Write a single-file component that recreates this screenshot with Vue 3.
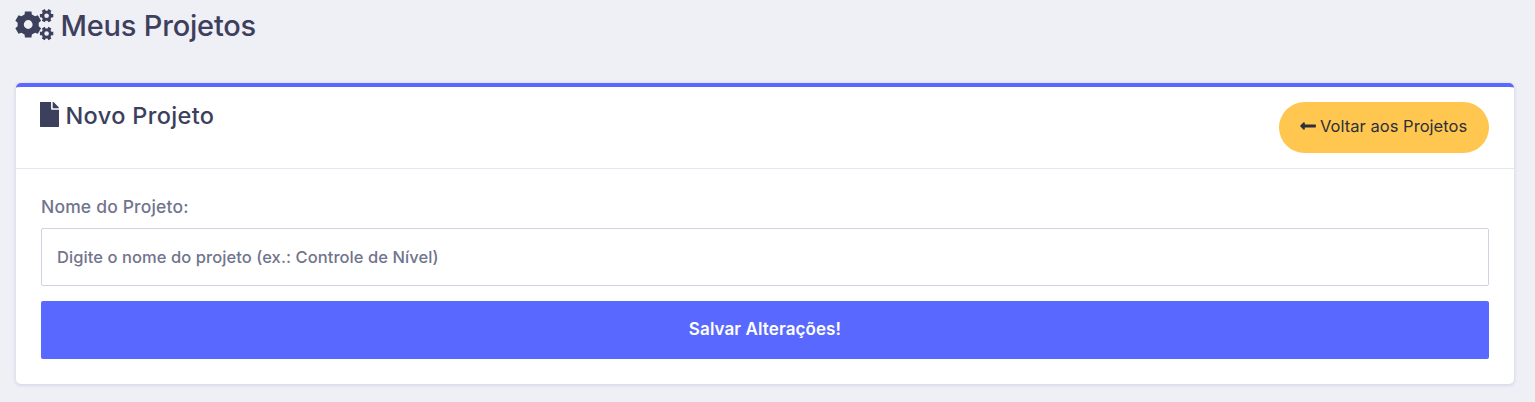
<script setup>
// Outline of a toothed wheel; `start` is the angle of the first tooth in degrees.
function gear(cx, cy, outer, root, hole, start) {
  const points = []
  for (let i = 0; i < 6; i++) {
    const mid = start + i * 60
    for (const [offset, radius] of [[-20, root], [-14, outer], [14, outer], [20, root]]) {
      const a = ((mid + offset) * Math.PI) / 180
      points.push(`${(cx + radius * Math.cos(a)).toFixed(2)} ${(cy + radius * Math.sin(a)).toFixed(2)}`)
    }
  }
  return `M${points.join('L')}Z M${cx - hole} ${cy}a${hole} ${hole} 0 1 0 ${hole * 2} 0a${hole} ${hole} 0 1 0 ${-hole * 2} 0Z`
}
const gears = [
  gear(12.2, 15.5, 13.4, 10.7, 4.4, 30),
  gear(30.6, 6.7, 6.9, 5.1, 2.3, 0),
  gear(30.6, 24.5, 6.9, 5.1, 2.3, 0),
].join(' ')
</script>

<template>
  <main class="page">
    <h1 class="title">
      <svg class="cogs" viewBox="0 0 38 31"><path :d="gears" fill-rule="evenodd" /></svg>
      <span>Meus Projetos</span>
    </h1>
    <section class="card">
      <header class="head">
        <h2 class="subtitle">
          <svg class="file" viewBox="0 0 384 512" preserveAspectRatio="none"><path d="M224 136V0H8C3 0 0 3 0 8v496c0 5 3 8 8 8h368c5 0 8-3 8-8V160H248c-13.2 0-24-10.8-24-24zm160-14.1v6.1H256V0h6.1c6.4 0 12.5 2.5 17 7l97.9 98c4.5 4.5 7 10.6 7 16.9z" /></svg>
          <span>Novo Projeto</span>
        </h2>
        <button class="back" type="button">
          <svg class="arrow" viewBox="0 0 448 512"><path d="M134.059 296H436c6.627 0 12-5.373 12-12v-56c0-6.627-5.373-12-12-12H134.059v-46.059c0-21.382-25.851-32.09-40.971-16.971L7.029 239.029c-9.373 9.373-9.373 24.569 0 33.941l86.059 86.059c15.119 15.119 40.971 4.411 40.971-16.971V296z" /></svg>
          <span>Voltar aos Projetos</span>
        </button>
      </header>
      <form class="body" @submit.prevent>
        <label class="label" for="name"><span>Nome do Projeto:</span></label>
        <input id="name" class="input" type="text" placeholder="Digite o nome do projeto (ex.: Controle de Nível)" />
        <button class="save" type="submit"><span>Salvar Alterações!</span></button>
      </form>
    </section>
  </main>
</template>

<style>
body {
  background: #efeff6;
}
</style>

<style scoped>
.page {
  box-sizing: border-box;
  height: 402px;
  padding: 9px 21px 0 16px;
  overflow: hidden;
  font-family: Inter, "Liberation Sans", sans-serif;
  color: #3d405c;
}
h1,
h2 {
  margin: 0;
  font-weight: 500;
}
svg {
  display: block;
  flex: none;
  overflow: visible;
  fill: currentColor;
}
.title {
  display: flex;
  height: 74px;
  font-size: 29px;
  line-height: 34px;
  letter-spacing: -0.2px;
}
.cogs {
  width: 38px;
  height: 31px;
  margin-right: 6.5px;
}
.card {
  box-sizing: border-box;
  width: 1498px;
  height: 301px;
  background: #fff;
  border-top: 4px solid #5969ff;
  border-radius: 5px;
  box-shadow: 0 1px 3px 1px rgba(154, 154, 204, 0.25);
}
.head {
  box-sizing: border-box;
  display: flex;
  justify-content: space-between;
  height: 82px;
  padding: 15px 25px 0 24px;
  border-bottom: 1px solid #e6e6f2;
}
.subtitle {
  display: flex;
  font-size: 23.5px;
  line-height: 28px;
  letter-spacing: 0.35px;
}
.file {
  width: 19px;
  height: 25px;
  margin-right: 6.5px;
}
.back {
  display: flex;
  align-items: center;
  box-sizing: border-box;
  width: 210px;
  height: 51px;
  padding: 0 0 3px 21px;
  border: 0;
  border-radius: 26px;
  background: #ffc750;
  color: #2e2f39;
  font: 400 16.5px/24px Inter, sans-serif;
  letter-spacing: 0.03px;
  white-space: nowrap;
}
.arrow {
  width: 16px;
  height: 18px;
  margin-right: 4px;
}
.body {
  display: flex;
  flex-direction: column;
  padding: 25px 25px 0;
}
.label {
  height: 34px;
  color: #71748d;
  font-size: 17.5px;
  font-weight: 500;
  line-height: 26px;
  letter-spacing: 0.17px;
}
.input {
  box-sizing: border-box;
  height: 58px;
  padding: 0 15px;
  border: 1px solid #d2d2e4;
  border-radius: 2px;
  background: #fff;
  font: 500 16.5px/24px Inter, sans-serif;
  letter-spacing: 0.07px;
}
.input::placeholder {
  color: #71748d;
  opacity: 1;
}
.save {
  height: 58px;
  margin-top: 15px;
  padding: 0 0 2px;
  border: 0;
  border-radius: 2px;
  background: #5969ff;
  color: #fff;
  font: 600 17px/24px Inter, sans-serif;
  letter-spacing: 0.1px;
}
</style>
